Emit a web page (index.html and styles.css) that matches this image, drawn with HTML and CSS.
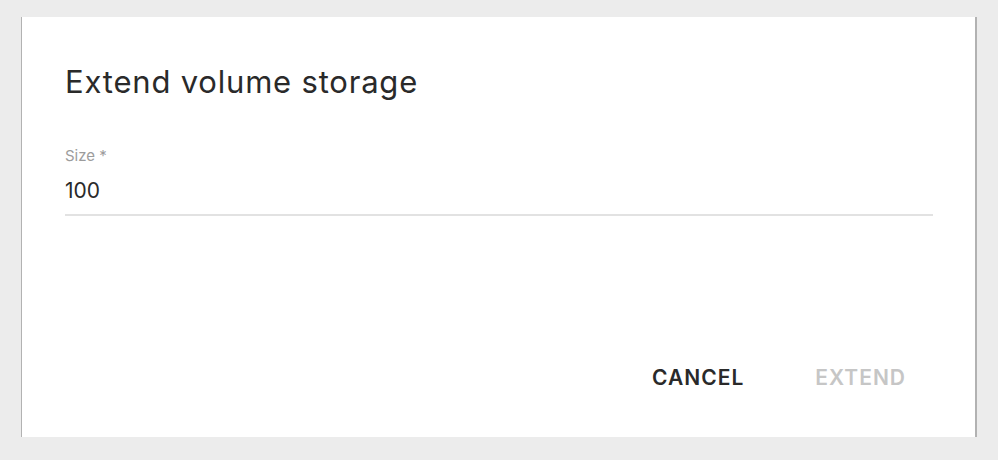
FILE: index.html
```html
<!DOCTYPE html>
<html lang="en">
<head>
  <meta charset="UTF-8">
  <title>Extend volume storage</title>
  <link rel="stylesheet" href="styles.css">
</head>
<body>
  <div class="dialog">
    <h2 class="dialog-title">Extend volume storage</h2>

    <div class="field">
      <label for="size">Size *</label>
      <input type="text" id="size" value="100">
    </div>

    <div class="actions">
      <button class="btn">Cancel</button>
      <button class="btn btn-disabled" disabled>Extend</button>
    </div>
  </div>
</body>
</html>
```

FILE: styles.css
```css
html, body {
  margin: 0;
  height: 100%;
}
body {
  background: #ececec;
  font-family: Inter, "Open Sans", sans-serif;
  color: #2a2a2a;
  padding: 17px 0 0 21px;
  box-sizing: border-box;
}
.dialog {
  width: 956px;
  height: 420px;
  box-sizing: border-box;
  background: #fff;
  border-left: 1px solid #b2b2b2;
  border-right: 2px solid #b2b2b2;
  padding: 0 42px 0 43px;
  display: flex;
  flex-direction: column;
}
.dialog-title {
  margin: 46px 0 0;
  font-size: 31px;
  font-weight: 400;
  line-height: 38px;
  letter-spacing: 0.8px;
}
.field {
  margin-top: 46px;
  display: flex;
  flex-direction: column;
}
.field label {
  font-size: 15px;
  color: #9c9c9c;
  line-height: 18px;
}
.field input {
  border: none;
  border-bottom: 2px solid #e2e2e2;
  padding: 12px 0 10px;
  font-family: inherit;
  font-size: 21px;
  line-height: 27px;
  color: #2a2a2a;
  outline: none;
}
.actions {
  margin-top: auto;
  margin-bottom: 36px;
  display: flex;
  justify-content: flex-end;
  gap: 16px;
}
.btn {
  background: none;
  border: none;
  font-family: inherit;
  font-size: 21px;
  font-weight: 600;
  line-height: 26px;
  letter-spacing: 1px;
  text-transform: uppercase;
  color: #2a2a2a;
  padding: 10px 27px 10px 28px;
  cursor: pointer;
}
.btn-disabled {
  color: #c6c6c6;
  cursor: default;
}
```
